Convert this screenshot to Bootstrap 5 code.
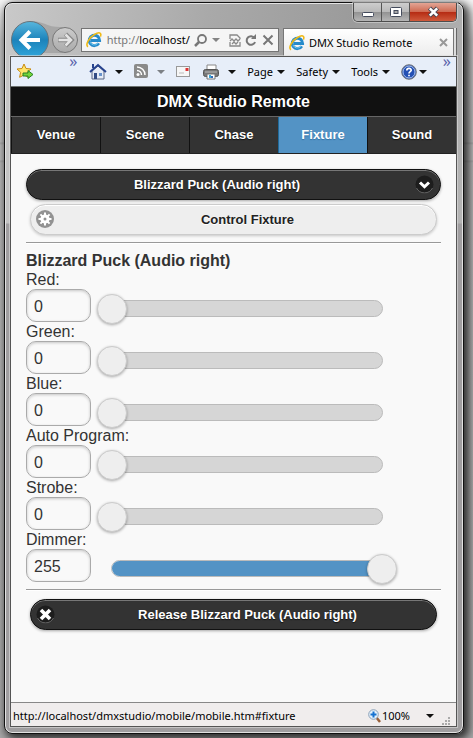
<!DOCTYPE html>
<html lang="en">
<head>
<meta charset="utf-8">
<meta name="viewport" content="width=device-width, initial-scale=1">
<title>DMX Studio Remote</title>
<link href="https://cdn.jsdelivr.net/npm/bootstrap@5.3.0/dist/css/bootstrap.min.css" rel="stylesheet">
<style>
body{background:linear-gradient(#f4f4f4,#c4c4c4 40px,#bdbdbd 142px,#a9a9a9 143px,#bdbdbd 145px,#bdbdbd 160px,#a9a9a9 161px,#b9b9b9 163px,#a8a8a8);font-family:"Liberation Sans",Arial,sans-serif;color:#333}
svg{display:block;flex:none}
.desk{min-height:100vh;padding:2px 9px 4px 4px}
.win{border:1px solid #111;border-radius:8px;box-shadow:inset 0 0 0 1px #e2e2e2,3px 3px 9px 2px #000b;background:linear-gradient(#0000 0 220px,#a09ea0 221px),linear-gradient(100deg,#c9c9c9,#a9a9a9 35%,#9b9b9b 60%,#c4c4c4 100%);padding:0 6px 6px 5px}
.ui-face{font-family:"Noto Sans","Segoe UI",sans-serif;font-size:11px;line-height:16px;color:#000}
.bare{border:0;background:none;padding:0;color:inherit}
.caps{height:19px;border:1px solid #4d4d4d;border-top:0;border-radius:0 0 5px 5px;box-shadow:0 0 0 1px #ddd8;overflow:hidden}
.caps button{width:28px;border:0;border-right:1px solid #555;background:linear-gradient(#cdcdcd,#b9b9b9 48%,#929292 50%,#b5b5b5)}
.caps .shut{width:46px;border-right:0;background:linear-gradient(#e3a595,#cf6b53 48%,#b52a12 50%,#cf5a3c)}
.nav-line{height:34px}
.arrows{margin-top:-2px}
.address{height:24px;width:198px;margin:6px 0 0 3px;border:1px solid #747474;background:#f5f5f5;padding:0 4px}
.url-text{color:#777;white-space:nowrap}
.url-text b{color:#000;font-weight:400}
.page-tab{height:28px;margin:6px 3px 0 4px;min-width:0;border:1px solid #777;border-bottom:0;background:linear-gradient(#fff,#ececec);padding:0 5px;box-shadow:2px 0 0 #ddd,3px 0 0 #666}
.pane{border:1px solid #555;box-shadow:0 0 0 1px #ddd9;background:#f9f9f9}
.tools{height:30px;background:#e7eef9;border-bottom:1px solid #6c716f;padding:0 5px}
.more{color:#5a62ab;font-size:16px;align-self:flex-start;line-height:8px}
.caret{width:0;height:0;border:4px solid transparent;border-top-color:#111;border-bottom:0}
.app-head{height:29px;line-height:29px;background:#111;color:#fff;font-size:16px;font-weight:700;text-shadow:0 -1px 1px #000}
.tabs-bar{height:38px;border-top:1px solid #666;border-bottom:1px solid #222;background:#333}
.tabs-bar a{color:#fff;font-size:13px;font-weight:700;line-height:36px;text-decoration:none;border-left:1px solid #111;text-shadow:0 1px 1px #111}
.tabs-bar a.active{background:#5393c5;border-color:#1f6a9a;text-shadow:0 1px 1px #3373a5}
.stage{padding:15px}
.pill{display:block;width:100%;height:31px;border-radius:16px;font-size:13px;line-height:18px;font-weight:700;border:1px solid #111;background:#333;color:#fff;text-shadow:0 1px 1px #111;box-shadow:inset 0 1px 0 #777,0 1px 3px #0005;padding:0 8px 0 36px;text-align:center}
select.pill{appearance:none;text-align-last:center;padding:0 40px 0 7px}
.pill.pale{background:#eee;color:#222;border-color:#ccc;text-shadow:0 1px 0 #fff;box-shadow:inset 0 1px 0 #fff,0 1px 3px #0003}
.ic-l{left:6px;top:6px}
.ic-r{right:7px;top:6px;pointer-events:none}
.rule{margin:7px 0 9px;border:0;border-top:1px solid #999;opacity:1;box-shadow:0 1px 0 #fff}
.fx-title{font-size:16px;line-height:18px;font-weight:700;margin:0}
.fx label{display:block;font-size:16px;line-height:19px}
.val{width:65px;height:33px;border:1px solid #aaa;border-radius:10px;background:#f9f9f9;color:#333;font-size:16px;padding:3px 7px 0;box-shadow:inset 0 1px 3px #0003}
.slide{display:grid;margin:4px 44px -2px 6px}
.slide>*{grid-area:1/1;align-self:center}
.groove{height:17px;margin:0 14px;border:1px solid #bbb;border-radius:9px;background:#d6d6d6;overflow:hidden}
.fill{height:100%;background:#5393c5}
.slide input{appearance:none;width:100%;height:30px;margin:0;background:none}
.slide input::-webkit-slider-runnable-track{height:30px;background:none}
.slide input::-webkit-slider-thumb{appearance:none;width:30px;height:30px;border-radius:50%;border:1px solid #ccc;background:#eee;box-shadow:0 1px 3px #0005}
.status{height:24px;border-top:1px solid #888;background:#f0eded;padding:2px 5px 0 2px}
</style>
</head>
<body>
<svg width="0" height="0" class="position-absolute">
<defs>
<linearGradient id="bl" x1="0" y1="0" x2="0" y2="1"><stop stop-color="#58b6dd"/><stop offset=".5" stop-color="#1c83bb"/><stop offset="1" stop-color="#2fa7dc"/></linearGradient>
<linearGradient id="gr" x1="0" y1="0" x2="0" y2="1"><stop stop-color="#ccc"/><stop offset="1" stop-color="#aaa"/></linearGradient>
<symbol id="ie" viewBox="0 0 16 16"><path d="M12.8 11.2A5.2 5.2 0 1 1 13.6 8.6H5" fill="none" stroke="#268bcb" stroke-width="3"/><path d="M12 11.2A4.6 4.6 0 0 1 4 10" fill="none" stroke="#6cc5ed" stroke-width="1"/><path d="M2 14.8C-1 13 3 5.500 8.500 2.500 13-.3 16 .4 14.400 4.600" fill="none" stroke="#efb915" stroke-width="1.600"/></symbol>
</defs>
</svg>
<div class="desk d-flex">
<div class="win flex-grow-1 d-flex flex-column">
  <div class="d-flex justify-content-end">
    <div class="caps d-flex">
      <button type="button" class="d-flex align-items-center justify-content-center p-0" aria-label="Minimize"><svg width="12" height="14"><rect x=".5" y="7.500" width="11" height="4" rx="1" fill="#fff" stroke="#444b5c"/></svg></button>
      <button type="button" class="d-flex align-items-center justify-content-center p-0" aria-label="Maximize"><svg width="12" height="12"><rect x=".5" y="1.500" width="11" height="9" rx="1" fill="#fff" stroke="#444b5c"/><rect x="4" y="4.500" width="4" height="3" fill="#aaa" stroke="#444b5c"/></svg></button>
      <button type="button" class="shut d-flex align-items-center justify-content-center p-0" aria-label="Close"><svg width="13" height="12"><path d="M2.500 2l8 8m0-8l-8 8" stroke="#4c4854" stroke-width="4.500"/><path d="M2.800 2.300l7.400 7.400m0-7.400l-7.400 7.400" stroke="#fff" stroke-width="2.500"/></svg></button>
    </div>
  </div>
  <div class="nav-line d-flex ui-face">
    <svg class="arrows" width="68" height="36" viewBox="11 20 68 36"><path d="M31 21C46 21 48 28 64 27V53H45z" fill="#8d8d8d" opacity=".5"/><circle cx="31" cy="40" r="18.500" fill="url(#bl)" stroke="#67747c"/><path d="M41 40H23M31 31.500L22.500 40 31 48.500" fill="none" stroke="#fff" stroke-width="4"/><circle cx="66" cy="40" r="12.500" fill="url(#gr)" stroke="#777"/><path d="M59 40H71M66.500 34l6 6-6 6" fill="none" stroke="#888" stroke-width="4.500"/><path d="M59.500 40H71M66.500 34.500l5.500 5.500-5.500 5.500" fill="none" stroke="#e3e3e3" stroke-width="2.500"/></svg>
    <div class="address d-flex align-items-center justify-content-between flex-shrink-0">
      <svg width="16" height="16"><use href="#ie"/></svg>
      <div class="url-text">http://<b>localhost/</b></div>
      <button type="button" class="bare" aria-label="Search"><svg width="13" height="13"><circle cx="8" cy="5" r="4" fill="none" stroke="#777" stroke-width="1.800"/><path d="M5 8L1 12" stroke="#777" stroke-width="2.500"/></svg></button>
      <span class="caret opacity-50"></span>
      <button type="button" class="bare ms-1" aria-label="Compatibility view"><svg width="12" height="13" fill="none" stroke="#888" stroke-width="1.300"><path d="M1 5V1h7l3 3v1M1 8v4h10V8M1 7l2-2 2 2 2-2 2 2 2-2M3 10l2-2 2 2 2-2"/></svg></button>
      <button type="button" class="bare" aria-label="Refresh"><svg width="12" height="13"><path d="M9.500 4A4.300 4.300 0 1 0 10 8" fill="none" stroke="#777" stroke-width="2"/><path d="M6 5h5V0z" fill="#777"/></svg></button>
      <button type="button" class="bare" aria-label="Stop"><svg width="12" height="12"><path d="M1.500 1.500l9 9m0-9l-9 9" stroke="#777" stroke-width="2"/></svg></button>
    </div>
    <div class="page-tab flex-grow-1 d-flex align-items-center">
      <svg width="16" height="16"><use href="#ie"/></svg>
      <span class="ms-1 text-nowrap">DMX Studio Remote</span>
      <button type="button" class="bare ms-auto" aria-label="Close tab"><svg width="9" height="9"><path d="M1 1l7 7m0-7l-7 7" stroke="#999" stroke-width="2"/></svg></button>
    </div>
  </div>
  <div class="pane flex-grow-1 d-flex flex-column">
    <div class="tools ui-face d-flex align-items-center justify-content-between">
      <button type="button" class="bare" aria-label="Add to favorites"><svg width="18" height="17"><path d="M8 1l2 4.500 5 .5-3.600 3.300 1 5L8 12l-4.400 2.300 1-5L1 6l5-.5z" fill="#ffe56a" stroke="#c88a12"/><path d="M7 10h5V7.500l5 4-5 4V13H7z" fill="#74d53a" stroke="#278022"/></svg></button>
      <span class="more ms-4">»</span>
      <button type="button" class="bare d-flex align-items-center gap-2" aria-label="Home"><svg width="18" height="17"><path d="M3 8v8h12V8L9 3z" fill="#e5ebf6" stroke="#5b6684"/><path d="M1 9l8-7 8 7" fill="none" stroke="#27438e" stroke-width="2"/><path d="M3 1h2v4H3z" fill="#27438e"/><path d="M5 10h3v6H5z" fill="#334b84"/><path d="M10 10h3v3h-3z" fill="#6992ca"/></svg><span class="caret"></span></button>
      <button type="button" class="bare d-flex align-items-center gap-2" aria-label="Feeds"><svg width="15" height="15"><rect width="14" height="14" rx="2" fill="#8a8a8a"/><circle cx="4" cy="10.500" r="1.500" fill="#fff"/><path d="M3 6.500A4.500 4.500 0 0 1 7.500 11M3 3a8 8 0 0 1 8 8" fill="none" stroke="#fff" stroke-width="1.500"/></svg><span class="caret opacity-50"></span></button>
      <button type="button" class="bare" aria-label="Read mail"><svg width="15" height="12"><rect x=".5" y=".5" width="13" height="10" fill="#f6f6f6" stroke="#999"/><path d="M9.500 2h3v3h-3z" fill="#dc3434"/><path d="M3 7h5" stroke="#bbb"/></svg></button>
      <button type="button" class="bare d-flex align-items-center gap-2" aria-label="Print"><svg width="17" height="16"><path d="M4 6V1h9v5" fill="#fff" stroke="#888"/><rect x=".5" y="5.500" width="15" height="7" rx="2" fill="#777" stroke="#555"/><path d="M2 8h12" stroke="#bbb"/><path d="M4 10h8v5H4z" fill="#fff" stroke="#777"/><path d="M6 11h2v3H6z" fill="#38a8da"/><path d="M8 12h2v2H8z" fill="#3267b4"/></svg><span class="caret"></span></button>
      <button type="button" class="bare d-flex align-items-center gap-1">Page<span class="caret"></span></button>
      <button type="button" class="bare d-flex align-items-center gap-1">Safety<span class="caret"></span></button>
      <button type="button" class="bare d-flex align-items-center gap-1">Tools<span class="caret"></span></button>
      <button type="button" class="bare d-flex align-items-center" aria-label="Help"><svg width="18" height="16"><circle cx="8" cy="8" r="7.300" fill="#2450b4" stroke="#777"/><circle cx="8" cy="8" r="6" fill="none" stroke="#a9c2ee"/><path d="M5.800 6.500C5.800 3.500 10.300 3.800 10.200 6.200 10.100 7.700 8 7.600 8 9.500M8 10.700v1.600" fill="none" stroke="#fff" stroke-width="1.700"/></svg><span class="caret"></span></button>
      <span class="more ms-1">»</span>
    </div>
    <header class="app-head text-center">DMX Studio Remote</header>
    <nav class="tabs-bar d-flex text-center">
      <a class="col" href="#venue">Venue</a>
      <a class="col" href="#scene">Scene</a>
      <a class="col" href="#chase">Chase</a>
      <a class="col active" href="#fixture" aria-current="page">Fixture</a>
      <a class="col" href="#sound">Sound</a>
    </nav>
    <main class="stage flex-grow-1">
      <div class="position-relative">
        <select class="pill" aria-label="Fixture"><option>Blizzard Puck (Audio right)</option></select>
        <svg class="ic-r position-absolute" width="19" height="19"><circle cx="9.500" cy="9.500" r="9" fill="#1d1d1d"/><path d="M1.500 13a9 9 0 0 0 16 0" fill="none" stroke="#666"/><path d="M5 7.500l4.500 4.300L14 7.500" fill="none" stroke="#fff" stroke-width="3"/></svg>
      </div>
      <div class="position-relative mt-1 mx-1">
        <button type="button" class="pill pale">Control Fixture</button>
        <svg class="ic-l position-absolute" width="18" height="18"><circle cx="9" cy="9" r="9" fill="#929292"/><g stroke="#fff" stroke-width="2"><path d="M9 2.500v13M2.500 9h13M4.400 4.400l9.200 9.200M13.600 4.400l-9.200 9.200"/></g><circle cx="9" cy="9" r="4.600" fill="#fff"/><circle cx="9" cy="9" r="1.500" fill="#929292"/></svg>
      </div>
      <hr class="rule">
      <h1 class="fx-title">Blizzard Puck (Audio right)</h1>
      <form class="fx">
        <label for="red">Red:</label>
        <div class="d-flex"><input id="red" class="val" value="0"><div class="slide flex-grow-1"><div class="groove"></div><input type="range" min="0" max="255" value="0" aria-label="Red level"></div></div>
        <label for="green">Green:</label>
        <div class="d-flex"><input id="green" class="val" value="0"><div class="slide flex-grow-1"><div class="groove"></div><input type="range" min="0" max="255" value="0" aria-label="Green level"></div></div>
        <label for="blue">Blue:</label>
        <div class="d-flex"><input id="blue" class="val" value="0"><div class="slide flex-grow-1"><div class="groove"></div><input type="range" min="0" max="255" value="0" aria-label="Blue level"></div></div>
        <label for="auto">Auto Program:</label>
        <div class="d-flex"><input id="auto" class="val" value="0"><div class="slide flex-grow-1"><div class="groove"></div><input type="range" min="0" max="255" value="0" aria-label="Auto Program level"></div></div>
        <label for="strobe">Strobe:</label>
        <div class="d-flex"><input id="strobe" class="val" value="0"><div class="slide flex-grow-1"><div class="groove"></div><input type="range" min="0" max="255" value="0" aria-label="Strobe level"></div></div>
        <label for="dimmer">Dimmer:</label>
        <div class="d-flex"><input id="dimmer" class="val" value="255"><div class="slide flex-grow-1"><div class="groove"><div class="fill" style="width:100%"></div></div><input type="range" min="0" max="255" value="255" aria-label="Dimmer level"></div></div>
      </form>
      <hr class="rule">
      <div class="position-relative mx-1">
        <button type="button" class="pill">Release Blizzard Puck (Audio right)</button>
        <svg class="ic-l position-absolute" width="19" height="19"><circle cx="9.500" cy="9.500" r="9" fill="#1d1d1d"/><path d="M1.500 13a9 9 0 0 0 16 0" fill="none" stroke="#666"/><path d="M5 5l9 9m0-9l-9 9" stroke="#fff" stroke-width="3.600"/></svg>
      </div>
    </main>
    <footer class="status ui-face d-flex align-items-center">
      <span class="text-nowrap">http://localhost/dmxstudio/mobile/mobile.htm#fixture</span>
      <button type="button" class="bare ms-auto me-2 d-flex align-items-center"><svg width="14" height="14"><path d="M8 8l4 5" stroke="#98603a" stroke-width="2.500"/><circle cx="5.500" cy="5.500" r="4.800" fill="#e4f1fb" stroke="#8aa0b8"/><path d="M5.500 2.500v6M2.500 5.500h6" stroke="#1672d0" stroke-width="2"/></svg><span class="me-3">100%</span><span class="caret"></span></button>
      <svg width="9" height="9" class="align-self-end" fill="#aaa"><path d="M6 0h2v2H6zM6 3h2v2H6zM6 6h2v2H6zM3 3h2v2H3zM3 6h2v2H3zM0 6h2v2H0z"/></svg>
    </footer>
  </div>
</div>
</div>
<script src="https://cdn.jsdelivr.net/npm/bootstrap@5.3.0/dist/js/bootstrap.bundle.min.js"></script>
</body>
</html>
